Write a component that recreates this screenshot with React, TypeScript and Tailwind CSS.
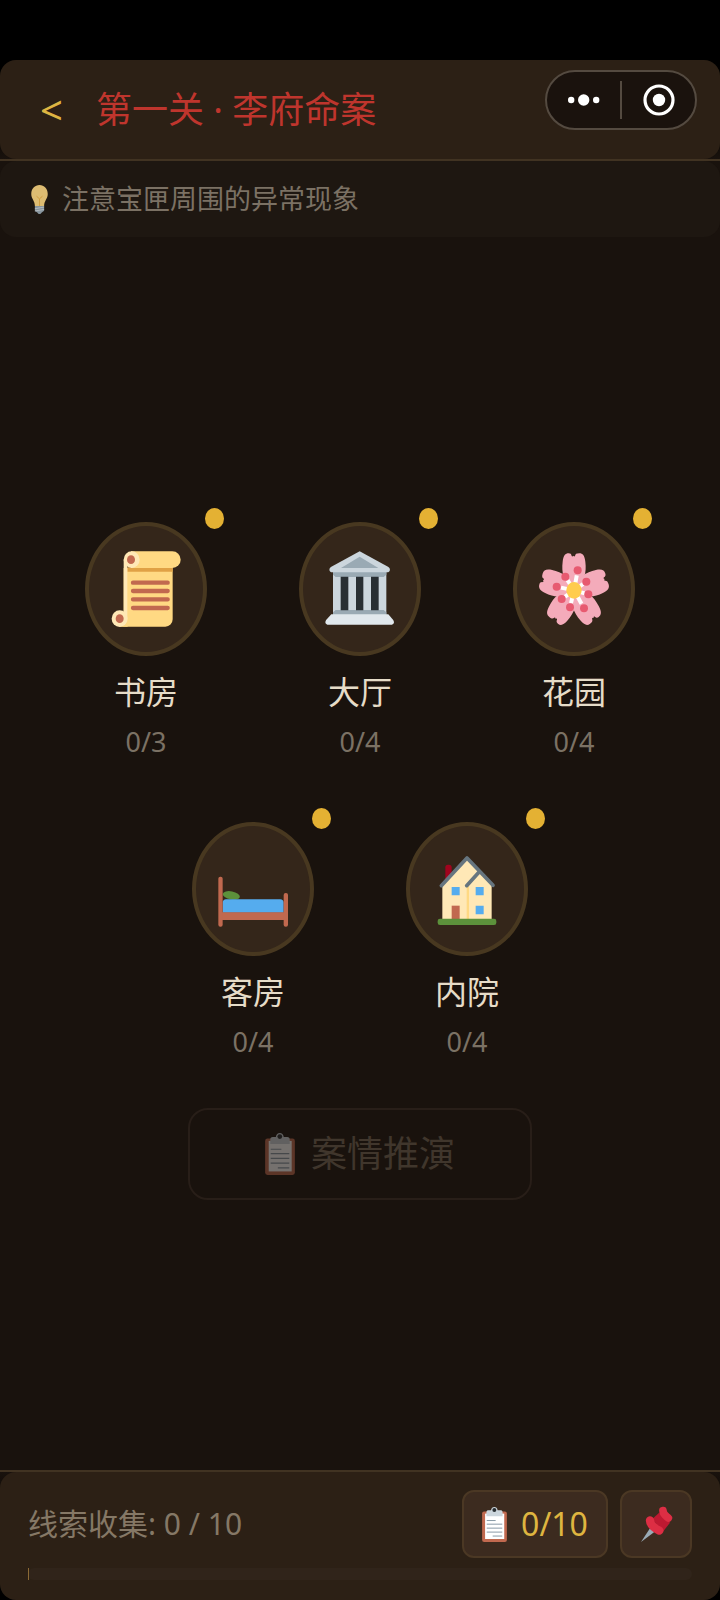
import { FC, ReactNode } from 'react';

interface Scene {
  name: string;
  found: number;
  total: number;
  icon: ReactNode;
}

const ScrollIcon: FC = () => (
  <svg viewBox="0 0 240 270" className="w-20 h-[90px]" aria-hidden="true">
    <path d="M53 72h147v154a22 22 0 0 1-22 22H41l12-24z" fill="#ffd983" />
    <path d="M64 70h136v13H64z" fill="#e0a145" />
    <path d="M53 47h11v177H53z" fill="#ffe8b6" />
    <path d="M75 22h124a25 25 0 0 1 0 50H75z" fill="#ffd983" />
    <ellipse cx="77" cy="47" rx="24" ry="25" fill="#ffe8b6" />
    <ellipse cx="41" cy="224" rx="24" ry="25" fill="#ffe8b6" />
    <path d="M41 248c14 0 24-10 24-24v24z" fill="#ffd983" />
    <ellipse cx="75" cy="47" rx="12" ry="13" fill="#c1694f" />
    <ellipse cx="41" cy="224" rx="12" ry="13" fill="#c1694f" />
    <path
      d="M81 116h104M81 141h104M81 166h104M81 192h104"
      stroke="#c1694f"
      strokeWidth="13"
      strokeLinecap="round"
    />
  </svg>
);

const HallIcon: FC = () => (
  <svg viewBox="0 0 240 270" className="w-20 h-[90px]" aria-hidden="true">
    <path d="M39 80h160v132H39z" fill="#ccd6dd" />
    <path d="M39 84h160v8l-8 7H47l-8-7zM47 198h144l8 7v12H39v-12z" fill="#9aaab4" />
    <path d="M62 98h23v101H62zM108 98h22v101h-22zM153 98h23v101h-23z" fill="#292f33" />
    <path d="M119 22l85 46c9 5 7 17-3 17H37c-10 0-12-12-3-17z" fill="#ccd6dd" />
    <path d="M119 38l56 34H63z" fill="#9aaab4" />
    <path d="M34 211h171l14 16c6 8 2 15-6 15H25c-8 0-12-7-6-15z" fill="#e1e8ed" />
  </svg>
);

const petalAngles = [0, 72, 144, 216, 288];

const stamens = [
  [131, 79],
  [157, 113],
  [163, 151],
  [150, 193],
  [108, 190],
  [83, 165],
  [68, 128],
  [94, 98],
];

const BlossomIcon: FC = () => (
  <svg viewBox="0 0 240 270" className="w-20 h-[90px]" aria-hidden="true">
    <g transform="translate(120 139) scale(1 1.07)" fill="#f4abba">
      {petalAngles.map((angle) => (
        <path
          key={angle}
          transform={`rotate(${angle})`}
          d="M0 0C-32-22-38-50-34-80c2-18 8-24 18-24 5 0 8 2 9 8q2 3 5-1q2 3 5 1c1-6 4-8 13-8 10 0 16 6 18 24C38-50 32-22 0 0z"
        />
      ))}
    </g>
    {stamens.map(([x, y]) => (
      <g key={`${x}-${y}`}>
        <path
          d={`M120 139L${120 + (x - 120) * 0.75} ${139 + (y - 139) * 0.75}`}
          stroke="#fff"
          strokeWidth="12"
        />
        <circle cx={x} cy={y} r="12" fill="#e75a70" />
      </g>
    ))}
    <ellipse cx="120" cy="139" rx="23" ry="25" fill="#ffcc4d" />
  </svg>
);

const BedIcon: FC = () => (
  <svg viewBox="0 0 240 270" className="w-20 h-[90px]" aria-hidden="true">
    <ellipse cx="55" cy="154" rx="26" ry="12" transform="rotate(11 55 154)" fill="#5c913b" />
    <path d="M29 206v-30c0-6 4-10 10-10h163c6 0 10 4 10 10v30z" fill="#55acee" />
    <path d="M25 205h190v23H25z" fill="#c1694f" />
    <rect x="16" y="98" width="13" height="150" rx="6" fill="#c1694f" />
    <rect x="212" y="147" width="13" height="101" rx="6" fill="#c1694f" />
  </svg>
);

const HouseIcon: FC = () => (
  <svg viewBox="0 0 240 270" className="w-20 h-[90px]" aria-hidden="true">
    <rect x="55" y="62" width="19" height="50" rx="8" fill="#a0041e" />
    <path d="M46 120l74-78 74 78v105H46z" fill="#ffe8b6" />
    <path d="M119 124h7v101h-7z" fill="#ffd983" />
    <path
      d="M43 125l77-83 78 82M119 125l38-42"
      fill="none"
      stroke="#66757f"
      strokeWidth="11"
      strokeLinecap="round"
      strokeLinejoin="round"
    />
    <path d="M74 129h24v25H74zM146 129h24v25h-24zM146 185h24v26h-24z" fill="#55acee" />
    <path d="M74 185h24v40H74z" fill="#c1694f" />
    <rect x="32" y="224" width="176" height="19" rx="7" fill="#5c913b" />
  </svg>
);

const ClipboardIcon: FC<{ className: string }> = ({ className }) => (
  <svg viewBox="0 0 75 106" className={className} aria-hidden="true">
    <rect y="14" width="75" height="92" rx="6" fill="#c1694f" />
    <path d="M9 20h58v77H9z" fill="#fff" />
    <path d="M13 28V16c0-4 3-6 6-6h8C28 3 32 0 37 0s9 3 10 10h9c3 0 6 2 6 6v12z" fill="#ccd6dd" />
    <circle cx="37" cy="9" r="6" fill="#292f33" />
    <path d="M14 41h27M14 52h47M14 64h47M14 76h47M32 88h29" stroke="#8899a6" strokeWidth="3" />
  </svg>
);

const PinIcon: FC = () => (
  <svg viewBox="0 0 99 111" className="w-[33px] h-[37px]" aria-hidden="true">
    <path d="M3 108L32 64l12 13z" fill="#99aab5" />
    <path d="M36 40l24-22 30 32-20 26z" fill="#be1931" />
    <path
      d="M30 43q1 11 10 19t18 12"
      fill="none"
      stroke="#dd2e44"
      strokeWidth="25"
      strokeLinecap="round"
    />
    <path
      d="M69 14q1 8 6 13t10 9"
      fill="none"
      stroke="#dd2e44"
      strokeWidth="23"
      strokeLinecap="round"
    />
  </svg>
);

const BulbIcon: FC = () => (
  <svg viewBox="0 0 50 88" className="w-[17px] h-[29px] opacity-85" aria-hidden="true">
    <path d="M25 0C11 0 0 11 0 27c0 15 11 20 11 37h28c0-17 11-22 11-37C50 11 39 0 25 0z" fill="#ffd983" />
    <path d="M16 34l9 8 9-8M25 42v22" fill="none" stroke="#f0b64a" strokeWidth="3" />
    <path d="M11 64h28v14l-8 6c-2 5-10 5-12 0l-8-6z" fill="#99aab5" />
    <path d="M11 72l28-5M11 79l28-5" stroke="#ccd6dd" strokeWidth="3" />
  </svg>
);

const scenes: Scene[] = [
  { name: '书房', found: 0, total: 3, icon: <ScrollIcon /> },
  { name: '大厅', found: 0, total: 4, icon: <HallIcon /> },
  { name: '花园', found: 0, total: 4, icon: <BlossomIcon /> },
  { name: '客房', found: 0, total: 4, icon: <BedIcon /> },
  { name: '内院', found: 0, total: 4, icon: <HouseIcon /> },
];

const SceneButton: FC<{ scene: Scene }> = ({ scene }) => (
  <button type="button" className="relative w-[172px] py-3.5 flex flex-col items-center">
    <span className="absolute top-0 right-2 w-[19px] h-[21px] rounded-[50%] bg-[#e4b133]" />
    <span className="w-[122px] h-[134px] flex items-center justify-center rounded-[50%] border-4 border-[#483820] bg-[#34261a]">
      {scene.icon}
    </span>
    <span className="mt-4 text-[32px] leading-10 text-[#e6dcc8]">{scene.name}</span>
    <span className="mt-3.5 text-[27px] leading-8 text-[#7b7164]">
      {scene.found}/{scene.total}
    </span>
  </button>
);

const Capsule: FC = () => (
  <div className="self-start mt-2.5 w-[152px] h-[60px] flex items-center rounded-full border-2 border-[#544a40] bg-[#1a120d]">
    <button type="button" aria-label="更多" className="flex-1 flex justify-center">
      <svg viewBox="0 0 32 12" className="w-8 h-3" fill="#fff" aria-hidden="true">
        <circle cx="3.2" cy="6" r="3.2" />
        <circle cx="15.7" cy="6" r="5.7" />
        <circle cx="28.2" cy="6" r="3.2" />
      </svg>
    </button>
    <span className="w-0.5 h-[38px] bg-[#544a40]" />
    <button type="button" aria-label="关闭" className="flex-1 flex justify-center">
      <svg viewBox="0 0 32 32" className="w-8 h-8" aria-hidden="true">
        <circle cx="16" cy="16" r="14" fill="none" stroke="#fff" strokeWidth="3.2" />
        <circle cx="16" cy="16" r="6.2" fill="#fff" />
      </svg>
    </button>
  </div>
);

const App: FC = () => {
  const collected = 0;
  const required = 10;

  return (
    <div className="min-h-screen flex flex-col bg-[#19120d] font-['Noto_Sans','Noto_Sans_CJK_SC',sans-serif]">
      <div className="h-[60px] bg-black" />
      <header className="bg-linear-to-b from-black to-[#19120d] border-b-2 border-[#413322]">
        <div className="h-[99px] pl-10 pr-[23px] flex items-center rounded-2xl bg-[#2c2015]">
          <button
            type="button"
            aria-label="返回"
            className="w-14 text-left text-[40px] leading-10 text-[#deb542]">
            &lt;
          </button>
          <h1 className="flex-1 text-4xl text-[#bf352d]">第一关 · 李府命案</h1>
          <Capsule />
        </div>
      </header>
      <p className="h-19 px-[31px] flex items-center gap-3.5 rounded-2xl bg-[#1e1711] text-[27px] leading-8 text-[#7b7164]">
        <BulbIcon />
        注意宝匣周围的异常现象
      </p>

      <main className="flex-1 flex flex-col items-center justify-center gap-9">
        <div className="max-w-[640px] flex flex-wrap justify-center gap-x-[42px] gap-y-9">
          {scenes.map((scene) => (
            <SceneButton key={scene.name} scene={scene} />
          ))}
        </div>
        <button
          type="button"
          disabled
          className="w-[344px] h-[92px] flex items-center justify-center gap-4 rounded-[20px] border-2 border-[#281e18] text-4xl text-[#40362c]">
          <ClipboardIcon className="w-[30px] h-[42px] opacity-40" />
          案情推演
        </button>
      </main>

      <footer className="bg-linear-to-b from-[#19120d] to-black border-t-2 border-[#413322]">
        <div className="px-7 pt-[18px] pb-5 rounded-2xl bg-[#2c2015]">
          <div className="flex items-center gap-3">
            <p className="flex-1 text-[30px] leading-10 text-[#857866]">
              线索收集: {collected} / {required}
            </p>
            <button
              type="button"
              className="w-[146px] h-[68px] flex items-center justify-center gap-3.5 rounded-xl border-2 border-[#4b3824] bg-[#3c2b1f] text-[32px] leading-10 text-[#dfb540]">
              <ClipboardIcon className="w-[25px] h-[35px]" />
              {collected}/{required}
            </button>
            <button
              type="button"
              aria-label="标记"
              className="w-[72px] h-[68px] flex items-center justify-center rounded-xl border-2 border-[#4b3824] bg-[#3c2b1f]">
              <PinIcon />
            </button>
          </div>
          <div className="mt-2.5 h-3 rounded-md bg-[#30241a]">
            <div
              className="h-3 min-w-px bg-[#8c6a35]"
              style={{ width: `${(collected / required) * 100}%` }}
            />
          </div>
        </div>
      </footer>
    </div>
  );
};

export default App;
